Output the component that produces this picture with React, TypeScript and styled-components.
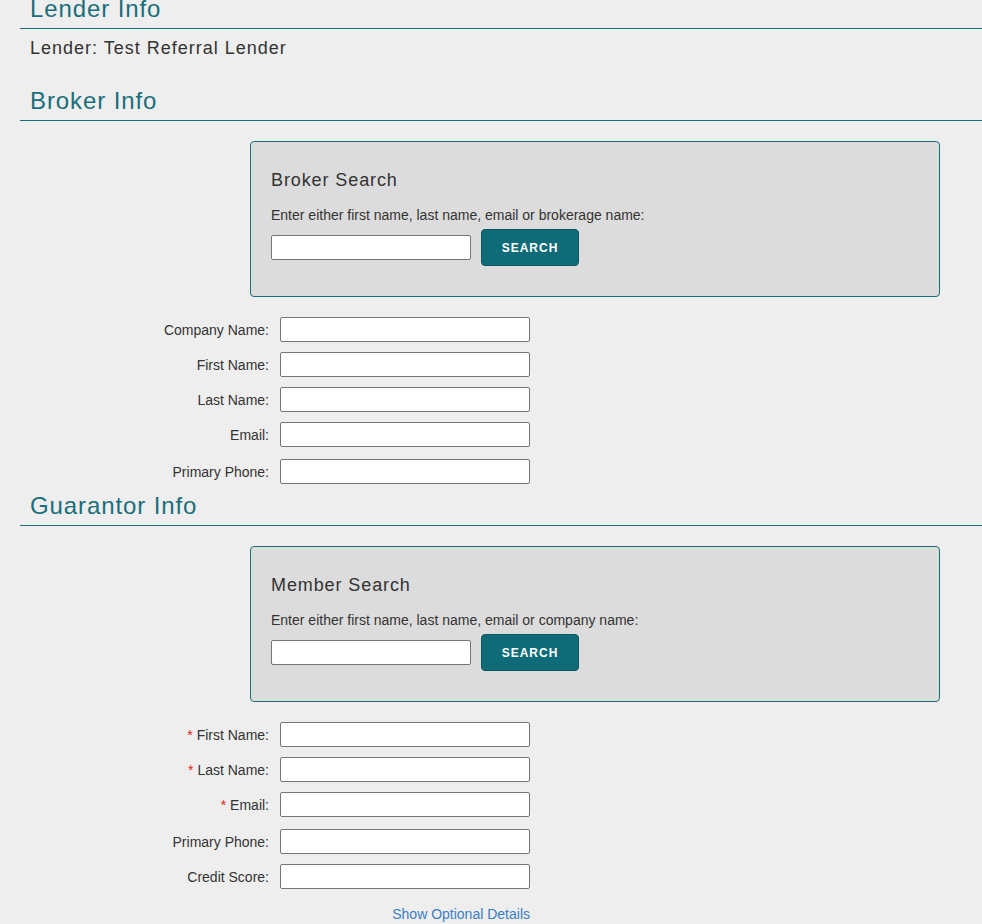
import React from "react";
import styled, { createGlobalStyle } from "styled-components";

const TEAL = "#1a6e7b";

const GlobalStyle = createGlobalStyle`
  html, body {
    margin: 0;
    padding: 0;
    background: #eeeeee;
  }
  body {
    font-family: "Liberation Sans", Arial, sans-serif;
    color: #333333;
  }
`;

const Page = styled.div`
  margin-top: -5px;
  padding: 0 0 0 20px;
`;

const Heading = styled.h2<{ $space?: number }>`
  margin: ${(p) => p.$space ?? 0}px 0 0 0;
  padding: 0 0 5px 10px;
  font-family: "Liberation Sans", Arial, sans-serif;
  font-weight: 400;
  font-size: 24px;
  line-height: 28px;
  letter-spacing: 0.9px;
  color: ${TEAL};
  border-bottom: 1px solid ${TEAL};
`;

const InfoLine = styled.div`
  margin: 8px 0 0 10px;
  font-size: 18px;
  line-height: 22px;
  letter-spacing: 1px;
  color: #333333;
`;

const SearchBox = styled.div`
  margin: 20px 0 0 230px;
  width: 648px;
  padding: 28px 20px 30px 20px;
  background: #dcdcdc;
  border: 1px solid ${TEAL};
  border-radius: 4px;
`;

const SearchTitle = styled.div`
  font-size: 18px;
  line-height: 20px;
  letter-spacing: 0.05em;
  color: #333333;
  margin-bottom: 17px;
`;

const SearchHint = styled.div`
  font-size: 14px;
  line-height: 16px;
  color: #333333;
  margin-bottom: 6px;
`;

const SearchRow = styled.div`
  display: flex;
  align-items: center;
  gap: 10px;
`;

const TextInput = styled.input<{ $width: number }>`
  box-sizing: border-box;
  width: ${(p) => p.$width}px;
  height: 25px;
  margin: 0;
  padding: 2px 4px;
  border: 1px solid #767676;
  border-radius: 2px;
  background: #ffffff;
  font-family: "Liberation Sans", Arial, sans-serif;
  font-size: 13px;
`;

const SearchButton = styled.button`
  box-sizing: border-box;
  width: 98px;
  height: 37px;
  margin: 0;
  padding: 0;
  background: #0f6b77;
  border: 1px solid #0b5862;
  border-radius: 4px;
  color: #ffffff;
  font-family: "Liberation Sans", Arial, sans-serif;
  font-weight: 700;
  font-size: 12px;
  letter-spacing: 1px;
  cursor: pointer;
`;

const Fields = styled.div`
  display: flex;
  flex-direction: column;
  gap: 10px;
  margin-top: 20px;
  width: 510px;
`;

const FieldRow = styled.div<{ $extra?: number }>`
  display: flex;
  align-items: center;
  gap: 11px;
  margin-top: ${(p) => p.$extra ?? 0}px;
`;

const Label = styled.label`
  flex: 0 0 249px;
  text-align: right;
  font-size: 14px;
  line-height: 16px;
  color: #333333;
`;

const Required = styled.span`
  color: #e0201b;
  margin-right: 4px;
`;

const LinkRow = styled.div`
  width: 510px;
  margin-top: 17px;
  text-align: right;
  font-size: 14px;
  line-height: 16px;
`;

const OptionalLink = styled.a`
  color: #3b7ec4;
  text-decoration: none;
  cursor: pointer;
`;

type Field = { label: string; required?: boolean; extra?: number };

const brokerFields: Field[] = [
  { label: "Company Name:" },
  { label: "First Name:" },
  { label: "Last Name:" },
  { label: "Email:" },
  { label: "Primary Phone:", extra: 2 },
];

const guarantorFields: Field[] = [
  { label: "First Name:", required: true },
  { label: "Last Name:", required: true },
  { label: "Email:", required: true },
  { label: "Primary Phone:", extra: 2 },
  { label: "Credit Score:" },
];

function FieldList({ fields }: { fields: Field[] }) {
  return (
    <Fields>
      {fields.map((f) => (
        <FieldRow key={f.label} $extra={f.extra}>
          <Label>
            {f.required && <Required>*</Required>}
            {f.label}
          </Label>
          <TextInput $width={250} type="text" />
        </FieldRow>
      ))}
    </Fields>
  );
}

function Search({ title, hint }: { title: string; hint: string }) {
  return (
    <SearchBox>
      <SearchTitle>{title}</SearchTitle>
      <SearchHint>{hint}</SearchHint>
      <SearchRow>
        <TextInput $width={200} type="text" />
        <SearchButton type="button">SEARCH</SearchButton>
      </SearchRow>
    </SearchBox>
  );
}

export default function App() {
  return (
    <>
      <GlobalStyle />
      <Page>
        <Heading>Lender Info</Heading>
        <InfoLine>Lender: Test Referral Lender</InfoLine>
        <Heading $space={28}>Broker Info</Heading>
        <Search
          title="Broker Search"
          hint="Enter either first name, last name, email or brokerage name:"
        />
        <FieldList fields={brokerFields} />
        <Heading $space={8}>Guarantor Info</Heading>
        <Search
          title="Member Search"
          hint="Enter either first name, last name, email or company name:"
        />
        <FieldList fields={guarantorFields} />
        <LinkRow>
          <OptionalLink>Show Optional Details</OptionalLink>
        </LinkRow>
      </Page>
    </>
  );
}
